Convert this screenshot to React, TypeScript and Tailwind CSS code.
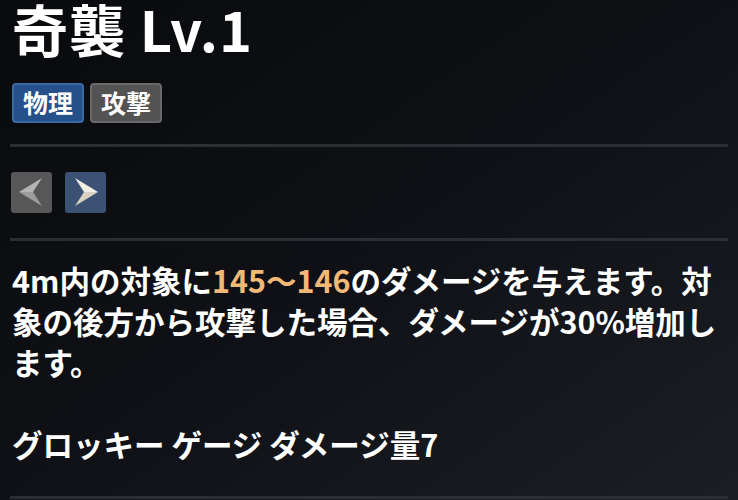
import React from 'react';

const font = { fontFamily: '"Noto Sans CJK JP", "Noto Sans", sans-serif' };

const Divider = ({ className = '' }: { className?: string }) => (
  <div className={`h-[3px] w-full bg-[#2c2e33] ${className}`} />
);

const ArrowButton = ({ dir }: { dir: 'left' | 'right' }) => {
  const isLeft = dir === 'left';
  return (
    <button
      className={`flex h-[41px] w-[41px] items-center justify-center rounded-[3px] ${
        isLeft ? 'bg-[#575757]' : 'bg-[#3c5274]'
      }`}
    >
      <svg width="41" height="41" viewBox="0 0 41 41">
        {isLeft ? (
          <>
            <polygon points="8,20 31,6 22,20" fill="#b4b4b4" />
            <polygon points="8,20 22,20 31,34" fill="#9c9c9c" />
          </>
        ) : (
          <>
            <polygon points="33,20 10,6 19,20" fill="#f3efe4" />
            <polygon points="33,20 19,20 10,34" fill="#d9d2c0" />
          </>
        )}
      </svg>
    </button>
  );
};

export default function App() {
  return (
    <div
      className="h-[500px] w-[738px] overflow-hidden bg-gradient-to-br from-[#090a0d] via-[#0f1116] to-[#1b1e24] px-[10px] text-white"
      style={font}
    >
      {/* Title */}
      <h1 className="pl-[2px] text-[56px] font-bold leading-[56px] tracking-[1px]">奇襲 Lv.1</h1>

      {/* Tags */}
      <div className="mt-[27px] flex gap-[6px] pl-[2px]">
        <span className="flex h-[40px] items-center rounded-[4px] border-2 border-[#3a6aa6] bg-[#255089] px-[9px] text-[25px] font-bold">
          物理
        </span>
        <span className="flex h-[40px] items-center rounded-[4px] border-2 border-[#6a6a6a] bg-[#535353] px-[9px] text-[25px] font-bold">
          攻撃
        </span>
      </div>

      <Divider className="mt-[21px]" />

      {/* Arrows */}
      <div className="mt-[25px] flex gap-[13px] pl-[1px]">
        <ArrowButton dir="left" />
        <ArrowButton dir="right" />
      </div>

      <Divider className="mt-[25px]" />

      {/* Description */}
      <p className="mt-[19px] pl-[2px] pr-[2px] text-[30.5px] font-bold leading-[41px]">
        4m内の対象に<span className="text-[#f1b878]">145〜146</span>のダメージを与えます。対象の後方から攻撃した場合、ダメージが30%増加します。
        <br />
        <br />
        グロッキー ゲージ ダメージ量7
      </p>

      <Divider className="mt-[31px]" />
    </div>
  );
}
